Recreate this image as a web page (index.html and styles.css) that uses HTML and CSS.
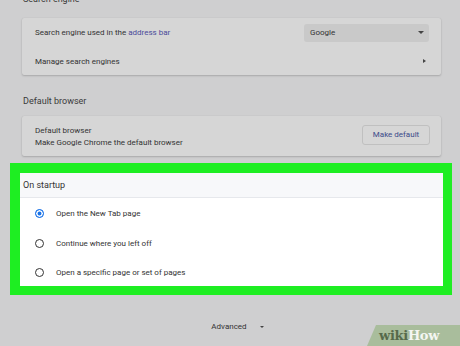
FILE: index.html
```html
<!DOCTYPE html>
<html>
<head>
<meta charset="utf-8">
<link rel="stylesheet" href="styles.css">
</head>
<body>
<div class="page">
  <div class="section-title first">Search engine</div>
  <div class="card">
    <div class="row">
      <span>Search engine used in the <span class="link">address bar</span></span>
      <div class="select"><span>Google</span><span class="caret"></span></div>
    </div>
    <div class="row">
      <span>Manage search engines</span>
      <span class="chev"></span>
    </div>
  </div>
  <div class="section-title">Default browser</div>
  <div class="card card2">
    <div class="two-line">
      <div>Default browser</div>
      <div>Make Google Chrome the default browser</div>
    </div>
    <div class="btn">Make default</div>
  </div>
  <div class="highlight">
    <div class="startup">
      <div class="startup-head">On startup</div>
      <div class="opt"><span class="radio on"></span><span>Open the New Tab page</span></div>
      <div class="opt"><span class="radio"></span><span>Continue where you left off</span></div>
      <div class="opt last"><span class="radio"></span><span>Open a specific page or set of pages</span></div>
    </div>
  </div>
  <div class="advanced"><span>Advanced</span><span class="caret small"></span></div>
</div>
<div class="wikihow"><span class="wiki">wiki</span><span class="how">How</span></div>
</body>
</html>
```
FILE: styles.css
```css
html, body {
  margin: 0;
  padding: 0;
  width: 460px;
  height: 346px;
  overflow: hidden;
  background: #cfcfd0;
  font-family: Roboto, "Liberation Sans", sans-serif;
  color: #333;
}
.page {
  position: relative;
  width: 460px;
  height: 346px;
}
.section-title {
  margin-left: 23px;
  font-size: 9px;
  line-height: 12px;
  color: #3a3a3a;
  height: 12px;
}
.section-title.first {
  margin-top: -7px;
  margin-bottom: 13px;
}
.card {
  margin-left: 22px;
  width: 419px;
  background: #d6d6d6;
  box-shadow: 0 1px 2px rgba(0,0,0,0.18), 0 0 1px rgba(0,0,0,0.12);
  border-radius: 2px;
  font-size: 8px;
  color: #333;
}
.row {
  height: 29px;
  display: flex;
  align-items: center;
  justify-content: space-between;
  padding: 0 17px 0 13px;
}
.row + .row { height: 28px; }
.link { color: #4a4a9a; }
.select {
  width: 114px;
  height: 18px;
  background: #c9c9c9;
  border-radius: 3px;
  display: flex;
  align-items: center;
  justify-content: space-between;
  padding: 0 5px 0 6px;
  margin-right: -5px;
  font-size: 8px;
  color: #333;
}
.caret {
  width: 0;
  height: 0;
  border-left: 3px solid transparent;
  border-right: 3px solid transparent;
  border-top: 3px solid #444;
}
.chev {
  width: 0;
  height: 0;
  border-top: 2.5px solid transparent;
  border-bottom: 2.5px solid transparent;
  border-left: 3px solid #444;
  margin-right: -2px;
}
.section-title:not(.first) {
  margin-top: 20px;
  margin-bottom: 9px;
}
.card2 {
  height: 40px;
  display: flex;
  align-items: center;
  justify-content: space-between;
  padding: 0 11px 0 13px;
  box-sizing: border-box;
}
.two-line {
  line-height: 12px;
  font-size: 8px;
  color: #333;
  padding-top: 1px;
}
.btn {
  width: 66px;
  height: 18px;
  border: 1px solid #c0c0c0;
  border-radius: 3px;
  display: flex;
  align-items: center;
  justify-content: center;
  color: #3b4a8a;
  font-size: 8px;
  margin-top: -3px;
}
.highlight {
  margin-top: 7px;
  margin-left: 10px;
  width: 423px;
  border: 10px solid #1eee22;
  border-right-width: 9px;
  border-bottom-width: 9px;
  background: #fff;
}
.startup {
  background: #fff;
  font-size: 8px;
  color: #333;
}
.startup-head {
  height: 24px;
  background: #f7f8fa;
  border-bottom: 1px solid #e6e8ec;
  display: flex;
  align-items: center;
  padding-left: 3px;
  font-size: 9px;
  color: #333;
}
.opt {
  height: 30px;
  display: flex;
  align-items: center;
  padding-left: 15px;
}
.opt.last { height: 28px; }
.radio {
  width: 7px;
  height: 7px;
  border: 1.5px solid #333;
  border-radius: 50%;
  margin-right: 12px;
  box-sizing: content-box;
}
.radio.on {
  border-color: #1a73e8;
  background: #1a73e8;
  box-shadow: inset 0 0 0 1.5px #fff;
}
.advanced {
  margin-top: 27px;
  display: flex;
  align-items: center;
  justify-content: center;
  gap: 13px;
  font-size: 8px;
  color: #333;
  padding-left: 15px;
}
.caret.small {
  border-left-width: 2.5px;
  border-right-width: 2.5px;
  border-top-width: 2.5px;
}
.wikihow {
  position: absolute;
  right: 0;
  bottom: 0;
  width: 93px;
  height: 21px;
  background: #a9bd9c;
  clip-path: polygon(9px 0, 100% 0, 100% 100%, 0 100%);
  font-family: "DejaVu Serif", "Liberation Serif", serif;
  font-weight: bold;
  font-size: 13px;
  line-height: 21px;
  padding-left: 12px;
  box-sizing: border-box;
  letter-spacing: -0.3px;
}
.wiki { color: #566a4b; }
.how { color: #f4f6f2; }
```
